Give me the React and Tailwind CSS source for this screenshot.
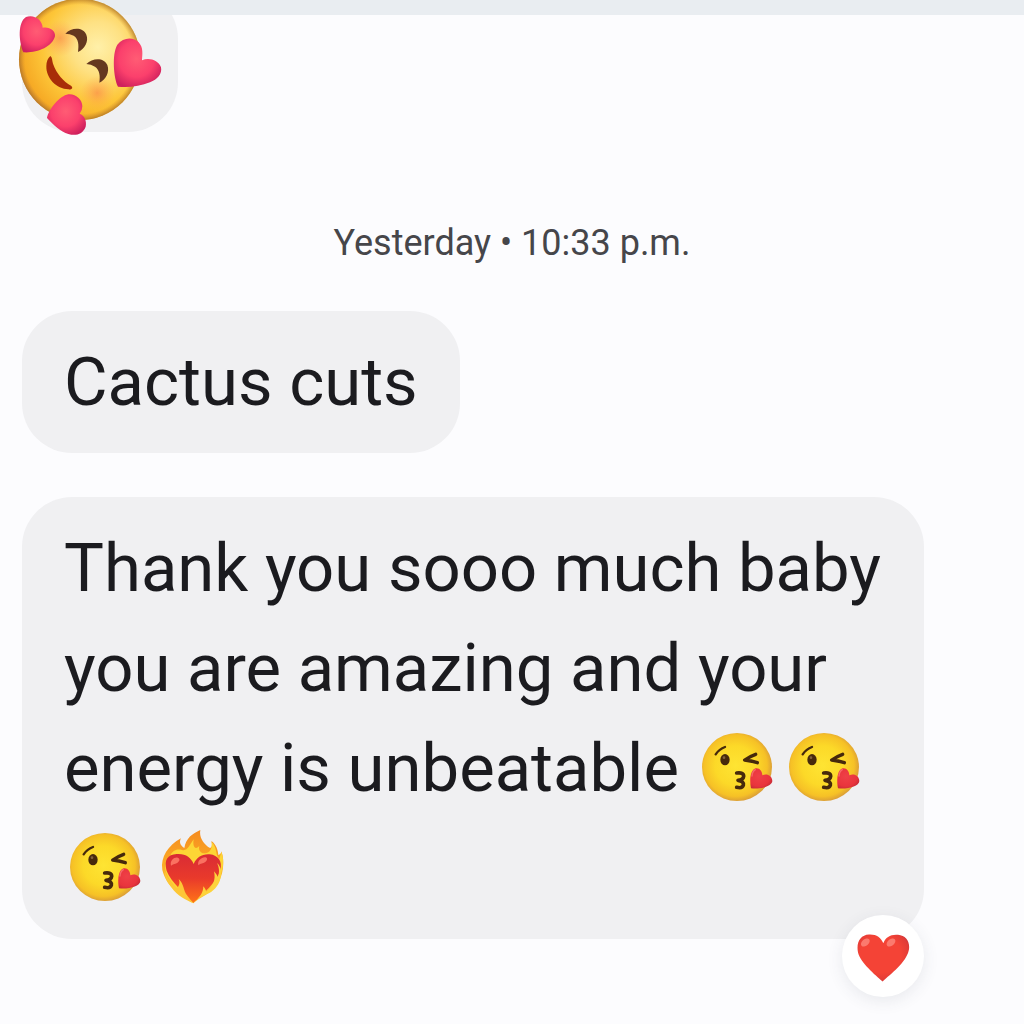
const KissEmoji = () => (
  <svg
    role="img"
    aria-label="Face blowing a kiss"
    viewBox="12 -21 261 294"
    className="inline-block h-[98px] w-[87px] align-top"
  >
    <defs>
      <radialGradient id="kissFace" cx="0.48" cy="0.48" r="0.53">
        <stop offset="0" stopColor="#fee433" />
        <stop offset="0.55" stopColor="#fcd928" />
        <stop offset="0.85" stopColor="#f6c126" />
        <stop offset="1" stopColor="#d99c38" />
      </radialGradient>
      <radialGradient id="kissHeart" cx="0.4" cy="0.4" r="0.65">
        <stop offset="0" stopColor="#ef4047" />
        <stop offset="0.75" stopColor="#e9343c" />
        <stop offset="1" stopColor="#c92c37" />
      </radialGradient>
    </defs>
    <ellipse cx="135" cy="126" rx="105" ry="102" fill="url(#kissFace)" />
    <g fill="none" stroke="#46290c" strokeLinecap="round" strokeLinejoin="round">
      <path d="M71 88Q82 72 99 66" strokeWidth="7" />
      <path d="M191 88Q174 94 158 105Q177 107 196 113" strokeWidth="10" />
      <path
        d="M134 144Q155 141 155 154Q154 164 138 166Q156 168 154 181Q151 191 134 187"
        strokeWidth="11"
      />
    </g>
    <ellipse cx="99" cy="104" rx="14" ry="17" fill="#46290c" />
    <ellipse cx="96" cy="98" rx="4" ry="4" fill="#80613c" />
    <path
      d="M177 190C173 170 173 139 188 131C201 126 211 138 211 151C225 145 240 152 241 168C240 184 207 193 177 190Z"
      fill="url(#kissHeart)"
    />
    <path
      d="M180 153Q181 139 190 134"
      fill="none"
      stroke="#f66a69"
      strokeWidth="4"
      strokeLinecap="round"
    />
  </svg>
);

const FireHeartEmoji = () => (
  <svg
    role="img"
    aria-label="Heart on fire"
    viewBox="273 -6 261 294"
    className="inline-block h-[98px] w-[87px] align-top"
  >
    <defs>
      <linearGradient id="flame" x1="0" y1="0" x2="0" y2="1">
        <stop offset="0" stopColor="#f58b20" />
        <stop offset="0.45" stopColor="#fbaa24" />
        <stop offset="1" stopColor="#fdcc35" />
      </linearGradient>
      <linearGradient id="fireHeart" x1="0" y1="0" x2="0" y2="1">
        <stop offset="0" stopColor="#d92b35" />
        <stop offset="0.5" stopColor="#e93a2b" />
        <stop offset="1" stopColor="#ff7417" />
      </linearGradient>
    </defs>
    <path
      d="M400 250C365 229 319 201 307 150C301 111 325 76 363 55C357 66 360 76 373 84C378 54 397 41 421 30C417 51 429 67 441 78C453 90 459 80 454 63C469 73 474 91 475 105C482 102 485 98 484 93C496 126 488 167 474 190C456 220 421 231 400 250Z"
      fill="url(#flame)"
    />
    <path
      d="M331 108C335 93 350 85 366 90C383 94 388 76 401 58C397 82 407 91 418 77C414 91 424 104 439 99C452 95 457 84 455 65C472 82 466 107 478 117L484 95C495 124 487 150 482 164C465 189 432 218 401 243C357 218 319 180 315 142C316 128 323 116 331 108Z"
      fill="#fdd535"
    />
    <path
      d="M400 249C379 225 333 187 320 153C311 119 323 104 350 102C377 100 393 112 401 132C409 112 427 101 449 103C475 106 488 124 481 151C473 184 426 225 400 249Z"
      fill="url(#fireHeart)"
    />
    <path
      d="M333 137C329 121 343 111 353 113C363 117 358 127 346 131Q338 132 333 137Z"
      fill="#fa7161"
    />
    <path
      d="M415 136C411 122 426 110 437 112C446 115 440 127 428 130Q419 131 415 136Z"
      fill="#fa7161"
    />
    <path
      d="M400 249C378 240 351 227 335 203C319 185 313 169 314 151C323 181 345 197 350 205C359 197 360 187 356 177C373 192 369 212 382 227Q391 240 400 249Z"
      fill="#fdc736"
    />
    <path
      d="M411 239C419 230 430 218 430 199C436 207 439 211 438 216C459 198 468 181 462 154C467 160 471 164 473 171C480 158 477 140 471 129C485 141 486 160 481 176C476 198 458 216 440 222Q423 229 411 239Z"
      fill="#fdd33b"
    />
  </svg>
);

const HeartsFaceEmoji = () => (
  <svg
    role="img"
    aria-label="Smiling face with hearts"
    viewBox="0 0 600 450"
    className="absolute -left-[22px] top-[11px] z-20 h-[150px] w-[200px]"
  >
    <defs>
      <radialGradient id="loveFace" cx="0.65" cy="0.4" r="0.7">
        <stop offset="0" stopColor="#fff0a9" />
        <stop offset="0.3" stopColor="#fee183" />
        <stop offset="0.65" stopColor="#fdc638" />
        <stop offset="0.9" stopColor="#f6aa25" />
        <stop offset="1" stopColor="#dc9232" />
      </radialGradient>
      <radialGradient id="loveRim" cx="0.5" cy="0.5" r="0.5">
        <stop offset="0.9" stopColor="#c9852b" stopOpacity="0" />
        <stop offset="1" stopColor="#a56b25" stopOpacity="0.7" />
      </radialGradient>
      <radialGradient id="blush">
        <stop offset="0" stopColor="#fb8748" stopOpacity="0.65" />
        <stop offset="1" stopColor="#ffa34d" stopOpacity="0" />
      </radialGradient>
      <radialGradient id="pinkHeart" cx="0.48" cy="0.42" r="0.62">
        <stop offset="0" stopColor="#ff5c74" />
        <stop offset="0.6" stopColor="#fb406c" />
        <stop offset="1" stopColor="#cf205d" />
      </radialGradient>
    </defs>
    <circle cx="239" cy="178" r="182" fill="url(#loveFace)" />
    <circle cx="239" cy="178" r="182" fill="url(#loveRim)" />
    <circle cx="180" cy="115" r="55" fill="url(#blush)" />
    <circle cx="292" cy="279" r="52" fill="url(#blush)" />
    <path
      d="M196 101C214 82 249 80 259 104C267 124 254 146 234 156C237 135 236 117 221 107Q210 101 196 101Z"
      fill="#65381f"
    />
    <path
      d="M259 192C278 173 312 172 322 195C330 216 317 240 298 248C301 227 299 210 285 200Q273 193 259 192Z"
      fill="#65381f"
    />
    <path
      d="M151 168C157 172 156 181 159 191C170 222 190 244 213 257C221 264 215 269 205 268C170 267 138 235 139 199Q139 178 151 168Z"
      fill="#a82d08"
    />
    <path
      d="M70 157C56 123 53 67 78 51C102 42 127 59 128 83C147 79 167 91 165 109C157 142 108 160 70 157Z"
      fill="url(#pinkHeart)"
    />
    <path
      d="M354 260C341 235 335 162 352 134C369 112 400 110 416 127C431 144 427 163 426 181C447 171 476 181 483 202C487 222 472 239 450 247C421 258 386 264 354 260Z"
      fill="url(#pinkHeart)"
    />
    <path
      d="M141 354C147 327 179 287 205 283C228 281 247 299 247 319Q247 332 239 341C253 346 261 362 257 380C249 402 228 409 205 402C182 395 160 375 141 354Z"
      fill="url(#pinkHeart)"
    />
  </svg>
);

const RedHeart = () => (
  <svg
    viewBox="75 94 162 152"
    className="h-[51px] w-[54px]"
    aria-hidden="true"
  >
    <defs>
      <radialGradient id="redHeart" cx="0.45" cy="0.42" r="0.65">
        <stop offset="0.6" stopColor="#f44336" />
        <stop offset="0.85" stopColor="#e23c37" />
        <stop offset="1" stopColor="#b9323a" />
      </radialGradient>
    </defs>
    <path
      d="M155 245C132 225 89 189 81 158C75 128 88 105 114 104C137 103 149 113 157 130C164 112 179 103 201 105C226 107 239 128 233 153C225 188 179 223 155 245Z"
      fill="url(#redHeart)"
    />
    <ellipse cx="103" cy="128" rx="15" ry="10" transform="rotate(-40 103 128)" fill="#fb7a6e" />
    <ellipse cx="180" cy="128" rx="15" ry="10" transform="rotate(-40 180 128)" fill="#fb7a6e" />
  </svg>
);

const Bubble = ({ children }) => (
  <div className="relative w-fit max-w-[92%] rounded-[50px] bg-[#f0f0f2] px-[42px] py-[21px] text-[67px] leading-[100px] text-[#1b1b1f]">
    {children}
  </div>
);

export default function App() {
  return (
    <div className="min-h-screen bg-[#fcfcfe] font-['Roboto',sans-serif]">
      <header className="relative z-10 h-[15px] bg-[#e9edf1]" />

      <main className="px-[22px]">
        <div className="relative -mt-[26px] h-[143px] w-[156px] rounded-[50px] bg-[#f0f0f2]">
          <HeartsFaceEmoji />
        </div>

        <p className="mt-[91px] text-center text-[36px] leading-10 text-[#46464a]">
          Yesterday • 10:33 p.m.
        </p>

        <div className="mt-12 flex flex-col gap-11">
          <Bubble>
            <p>Cactus cuts</p>
          </Bubble>

          <Bubble>
            <p>
              Thank you sooo much baby you are amazing and your energy is
              unbeatable <KissEmoji />
              <KissEmoji />
              <KissEmoji />
              <FireHeartEmoji />
            </p>
            <button
              aria-label="Heart reaction"
              className="absolute right-0 -bottom-[58px] flex size-[82px] items-center justify-center rounded-full bg-white shadow-[0_4px_16px_rgba(60,64,90,0.10)]"
            >
              <RedHeart />
            </button>
          </Bubble>
        </div>
      </main>
    </div>
  );
}
